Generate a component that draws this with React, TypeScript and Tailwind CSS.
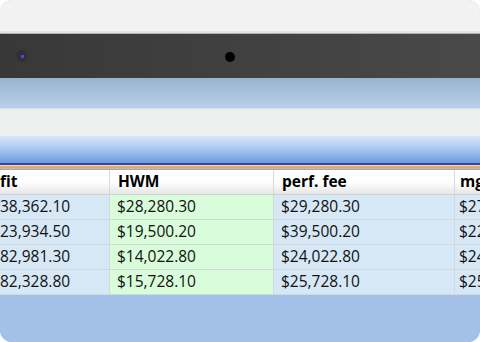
import React from "react";

const rows = [
  ["38,362.10", "$28,280.30", "$29,280.30", "$27"],
  ["23,934.50", "$19,500.20", "$39,500.20", "$22"],
  ["82,981.30", "$14,022.80", "$24,022.80", "$24"],
  ["82,328.80", "$15,728.10", "$25,728.10", "$25"],
];

export default function App() {
  return (
    <div className="w-[480px] h-[342px] bg-white overflow-hidden" style={{ fontFamily: '"Open Sans", "Noto Sans", sans-serif' }}>
      <div className="w-full h-full rounded-[12px] overflow-hidden flex flex-col bg-[#a3c1e8]">
        <div className="h-[31px] bg-[#f2f2f2] shrink-0" />
        <div className="h-[2px] bg-[#e4e4e4] shrink-0" />
        <div className="h-[1px] bg-[#b0b0b0] shrink-0" />
        <div className="h-[44px] shrink-0 bg-gradient-to-r from-[#383838] to-[#494949] flex items-center relative">
          <div className="absolute left-[16px] top-[16px] w-[12px] h-[12px] rounded-full bg-[#303035] flex items-center justify-center">
            <div className="w-[3px] h-[3px] bg-[#5a3ee8]" />
          </div>
          <div className="absolute left-[225px] top-[18px] w-[10px] h-[10px] rounded-full bg-black" />
        </div>
        <div className="h-[30px] shrink-0 bg-gradient-to-b from-[#98b3cf] to-[#bad0ea]" />
        <div className="h-[1px] shrink-0 bg-[#d3dfee]" />
        <div className="h-[27px] shrink-0 bg-[#eef0ef]" />
        <div className="h-[27px] shrink-0 bg-gradient-to-b from-[#d8e7fb] via-[#a9c6f0] to-[#6b9be0]" />
        <div className="h-[2px] shrink-0 bg-[#34449e]" />
        <div className="h-[1px] shrink-0 bg-[#f3dcc0]" />
        <div className="h-[2px] shrink-0 bg-[#e2a86a]" />
        <div className="h-[1px] shrink-0 bg-[#c9b9a0]" />
        <div className="h-[1px] shrink-0 bg-[#a8a8a8]" />
        <div className="shrink-0 flex h-[25px] bg-gradient-to-b from-white via-white to-[#e6e6e6] border-b border-[#d0d0d0] font-bold text-[15.5px] text-black overflow-hidden">
          <div className="w-[110px] shrink-0 border-r border-[#dadada] flex items-center">fit</div>
          <div className="w-[164px] shrink-0 border-r border-[#dadada] flex items-center pl-[8px]">HWM</div>
          <div className="w-[181px] shrink-0 border-r border-[#dadada] flex items-center pl-[8px]">perf. fee</div>
          <div className="flex-1 flex items-center pl-[5px] overflow-hidden whitespace-nowrap">mg</div>
        </div>
        {rows.map((r, i) => (
          <div key={i} className="shrink-0 flex h-[25px] border-b border-[#d4d8dc] text-[15.5px] font-medium text-[#111] overflow-hidden">
            <div className="w-[110px] shrink-0 bg-[#d6e7f5] border-r border-[#d4d8dc] flex items-center">{r[0]}</div>
            <div className="w-[164px] shrink-0 bg-[#d9fcdb] border-r border-[#d4d8dc] flex items-center pl-[7px]">{r[1]}</div>
            <div className="w-[181px] shrink-0 bg-[#d6e7f5] border-r border-[#d4d8dc] flex items-center pl-[7px]">{r[2]}</div>
            <div className="flex-1 bg-[#d6e7f5] flex items-center pl-[4px] overflow-hidden whitespace-nowrap">{r[3]}</div>
          </div>
        ))}
        <div className="flex-1 bg-[#a3c1e8]" />
      </div>
    </div>
  );
}
